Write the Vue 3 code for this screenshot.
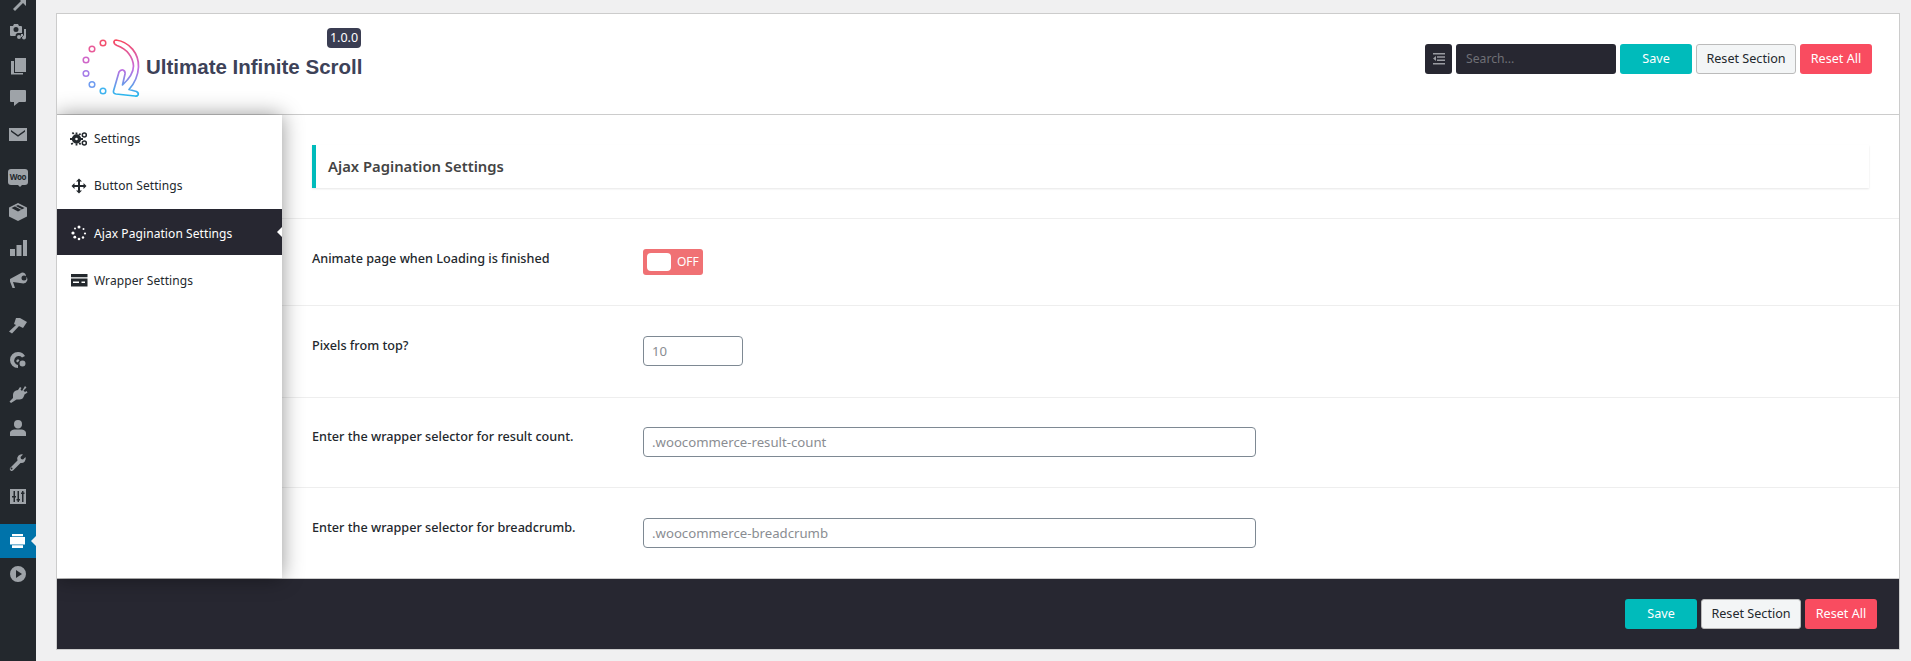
<script setup>
const adminIcons = [
  { top: -8, d: 'M5 17l8-8-3-3h8v8l-3-3-8 8z' },
  { top: 22, d: 'M2 4h3l1-2h4l1 2h2a1 1 0 0 1 1 1v6H9.500a3 3 0 0 0-2 3H3a1 1 0 0 1-1-1zM8 5a2.500 2.500 0 1 0 0 5 2.500 2.500 0 0 0 0-5zM16 7h2v8.500a2 2 0 1 1-2-2zM9 15a2 2 0 1 1 4 0 2 2 0 0 1-4 0zM13 12h2v3h-2z', rule: 'evenodd' },
  { top: 56, d: 'M7 2h11v14H7zM3 5h3v12h9v1.500H3z' },
  { top: 87, d: 'M3 3h14a1 1 0 0 1 1 1v10a1 1 0 0 1-1 1h-6l-5 4v-4H3a1 1 0 0 1-1-1V4a1 1 0 0 1 1-1z' },
  { top: 124, d: 'M1 4h18v13H1zM3 6l7 5 7-5v1.800l-7 5-7-5z', rule: 'evenodd' },
  { top: 168, woo: true },
  { top: 202, d: 'M10 1l9 4.500v9L10 19l-9-4.500v-9zM3.500 6L10 9.500 16.500 6 10 3zM7 4.500L13.500 8l1-.5L8 4z', rule: 'evenodd' },
  { top: 238, d: 'M2 11h5v7H2zM8.500 7h5v11h-5zM15 2h4v16h-4z' },
  { top: 270, d: 'M18 6.500a4 4 0 0 1-2.500 7L5 12l2 6H4.500L2 11.500V9l12-6.500a4 4 0 0 1 4 4zM13.500 8a2.500 2.500 0 1 0 5 0 2.500 2.500 0 0 0-5 0z', rule: 'evenodd' },
  { top: 316, d: 'M8 2h4l7 4-4 6-4-2 1-1-8 8.500L1 15.500 8 9 6 8z' },
  { top: 350, d: 'M10 2a8 8 0 0 1 7 4l-3 1.500a4.500 4.500 0 1 0-4 7.500v3a8 8 0 0 1 0-16zM14.500 10.500a3 3 0 1 1 0 6 3 3 0 0 1 0-6zM10 9l1.500 1.500-2 2L8 11z' },
  { top: 384, d: 'M17 2l1.500 1.500-3 3L17 8l1.500-1 1 1.500-3 2-.5 1.500a5 5 0 0 1-5 3.500l-2.500 0L3 19l-1.500-1.500 3.500-3.500 0-3a5 5 0 0 1 3-4.500L10 6l2-3 1.500 1-1 1.500 1.500 1.500z' },
  { top: 418, d: 'M10 2a4 4 0 0 1 4 4 4 4 0 0 1-4 4.500A4 4 0 0 1 6 6a4 4 0 0 1 4-4zM7 11.500h6c2.500 0 5 1.500 5 3.500v3H2v-3c0-2 2.500-3.500 5-3.500z' },
  { top: 452, d: 'M17.500 5l-2.500 2.500-2-.5-.5-2L15 2.500a4.500 4.500 0 0 0-5.500 6L2 16a2 2 0 0 0 3 2.500l7.500-7.500a4.500 4.500 0 0 0 5-6zM3.500 15.500a1 1 0 1 1 0 2 1 1 0 0 1 0-2z', rule: 'evenodd' },
  { top: 486, d: 'M2 3h16v15H2zM5.500 5v5H4v1.500h1.500V16H7v-4.500h1V10H7V5zM9.500 5v8h-1v1.500h1V16H11v-1.500h1V13h-1V5zM14 5v1.500h-1V8h1v8h1.500V8h1V6.500h-1V5z', rule: 'evenodd' },
  { top: 531, d: 'M4 3h11v2.300H4zM2 6h15v7.500H2zM4 14.300h11V17H4z', active: true },
  { top: 564, d: 'M10 2a8 8 0 1 1 0 16 8 8 0 0 1 0-16zM8 6v8l6-4z', rule: 'evenodd' }
]
const menu = [
  { label: 'Settings', icon: 'gears' },
  { label: 'Button Settings', icon: 'move' },
  { label: 'Ajax Pagination Settings', icon: 'spinner', active: true },
  { label: 'Wrapper Settings', icon: 'card' }
]
const dots = [
  [103, 43, '#f2506e'], [92, 49, '#e85a98'], [86, 60, '#cf66c8'],
  [86, 73.500, '#a67ce8'], [92, 84.500, '#6f9cf0'], [103, 91, '#3fb4f0']
]
</script>

<template>
  <div class="page">
    <aside class="adminbar">
      <div class="current"></div>
      <template v-for="(ic, i) in adminIcons" :key="i">
        <div v-if="ic.woo" class="woo" :style="{ top: ic.top + 1 + 'px' }"><span>Woo</span></div>
        <svg v-else class="aicon" :class="{ on: ic.active }" :style="{ top: ic.top + 'px' }" viewBox="0 0 20 20">
          <path :d="ic.d" :fill-rule="ic.rule || 'nonzero'" />
        </svg>
      </template>
    </aside>

    <main class="panel">
      <header class="top">
        <div class="brand">
          <svg class="logo" width="70" height="70" viewBox="77 34 70 70">
            <defs>
              <linearGradient id="lg" gradientUnits="userSpaceOnUse" x1="125" y1="40" x2="125" y2="97">
                <stop offset="0" stop-color="#f8485e" />
                <stop offset=".5" stop-color="#c56ce0" />
                <stop offset="1" stop-color="#22bdf0" />
              </linearGradient>
            </defs>
            <circle v-for="(d, i) in dots" :key="i" :cx="d[0]" :cy="d[1]" r="2.800" fill="none" :stroke="d[2]" stroke-width="1.500" />
            <path d="M116 40 C130 42 139 54 138.500 67 C138 76 134 84 129 89.500 L136.500 91.500 Q139 93 138 95 Q137 96.500 135 96 L116 94 Q113 93.500 113.500 91 L119 72 Q120.500 69.500 123 70 Q125.500 71 125 74 L122.500 85 C129 79 133.500 73 133.500 66 C133 57 127 49 117 45.500 Q113.500 44 114 41.500 Q114.500 40 116 40 Z" fill="none" stroke="url(#lg)" stroke-width="1.700" stroke-linejoin="round" />
          </svg>
          <span class="name">Ultimate Infinite Scroll</span>
          <span class="ver">1.0.0</span>
        </div>
        <div class="actions">
          <button class="expand" aria-label="Expand">
            <svg width="14" height="14" viewBox="0 0 14 14"><path d="M1 1h12v1.500H1zM5 4.200h8v1.500H5zM5 7.400h8v1.500H5zM1 11h12v1.600H1zM4 4v5L1 6.500z" fill="#9a9ba1" /></svg>
          </button>
          <div class="search">Search...</div>
          <button class="btn save">Save</button>
          <button class="btn reset">Reset Section</button>
          <button class="btn all">Reset All</button>
        </div>
      </header>

      <div class="middle">
        <nav class="menu">
          <a v-for="m in menu" :key="m.label" class="item" :class="{ active: m.active }">
            <svg class="micon" width="18" height="18" viewBox="0 0 18 18">
              <g v-if="m.icon === 'gears'">
                <circle cx="6.500" cy="9" r="3" fill="none" stroke="currentColor" stroke-width="3.400" />
                <path d="M5.600 2.500h1.800v2h-1.800zM5.600 13.500h1.800v2h-1.800zM0 8.100h2v1.800H0zM11 8.100h2v1.800h-2zM1.700 3l1.400-1.100 1.300 1.600L3 4.600zM8.600 13.400l1.400-1.100 1.300 1.600-1.400 1.100zM1.700 15l-1-1.400 1.700-1.200 1 1.400zM9.400 5.600l-1-1.400 1.700-1.200 1 1.400z" fill="currentColor" />
                <circle cx="14.300" cy="5" r="2" fill="none" stroke="currentColor" stroke-width="1.500" />
                <circle cx="14.300" cy="13" r="2" fill="none" stroke="currentColor" stroke-width="1.500" />
              </g>
              <path v-else-if="m.icon === 'move'" d="M9 1.500l3 3h-2v3.500h3.500V6l3 3-3 3v-2H10v3.500h2l-3 3-3-3h2V10H4.500v2l-3-3 3-3v2H8V4.500H6z" fill="currentColor" />
              <g v-else-if="m.icon === 'spinner'" fill="currentColor">
                <circle cx="9" cy="3" r="1.500" /><circle cx="13.500" cy="5" r="1" /><circle cx="15" cy="9.500" r="1.100" />
                <circle cx="13" cy="13.500" r="1.200" /><circle cx="9" cy="15" r="1.300" /><circle cx="4.800" cy="13.200" r="1.400" />
                <circle cx="3" cy="9" r="1.600" /><circle cx="5" cy="4.500" r="1" />
              </g>
              <path v-else d="M1 3h16.500v12.500H1zM1 6.200v1.300h16.500V6.200zM3 10.500v1.600h6v-1.600zM11.500 10.500v1.600h3.500v-1.600z" fill="currentColor" fill-rule="evenodd" />
            </svg>
            <span>{{ m.label }}</span>
          </a>
        </nav>

        <section class="content">
          <div class="heading-row">
            <h2 class="heading">Ajax Pagination Settings</h2>
          </div>
          <div class="row r1">
            <label class="lbl">Animate page when Loading is finished</label>
            <div class="toggle"><i class="knob"></i><span>OFF</span></div>
          </div>
          <div class="row r2">
            <label class="lbl">Pixels from top?</label>
            <input class="field small" value="10" />
          </div>
          <div class="row r3">
            <label class="lbl">Enter the wrapper selector for result count.</label>
            <input class="field wide" value=".woocommerce-result-count" />
          </div>
          <div class="row r4">
            <label class="lbl">Enter the wrapper selector for breadcrumb.</label>
            <input class="field wide" value=".woocommerce-breadcrumb" />
          </div>
        </section>
      </div>

      <footer class="bottom">
        <button class="btn save">Save</button>
        <button class="btn reset">Reset Section</button>
        <button class="btn all">Reset All</button>
      </footer>
    </main>
  </div>
</template>

<style>
html, body { margin: 0; background: #f0f0f1; }
</style>

<style scoped>
.page {
  display: flex;
  height: 661px;
  overflow: hidden;
  font-family: "Noto Sans", "Open Sans", sans-serif;
  background: #f0f0f1;
}
.adminbar {
  position: relative;
  flex: 0 0 36px;
  background: #23282d;
}
.current {
  position: absolute;
  left: 0;
  top: 524px;
  width: 36px;
  height: 34px;
  background: #0073aa;
}
.current::after {
  content: "";
  position: absolute;
  right: 0;
  top: 12px;
  border: 5px solid transparent;
  border-right-color: #f0f0f1;
  border-left-width: 0;
}
.aicon {
  position: absolute;
  left: 8px;
  width: 20px;
  height: 20px;
  fill: #9ea3a8;
}
.aicon.on { fill: #fff; }
.woo {
  position: absolute;
  left: 8px;
  width: 20px;
  height: 16px;
  background: #9ea3a8;
  border-radius: 3px;
  display: flex;
  align-items: center;
  justify-content: center;
}
.woo::after {
  content: "";
  position: absolute;
  left: 10px;
  bottom: -2px;
  border: 2px solid transparent;
  border-top-color: #9ea3a8;
  border-bottom-width: 0;
}
.woo span {
  font-size: 8px;
  font-weight: 700;
  color: #23282d;
  letter-spacing: -.4px;
  line-height: 1;
}
.panel {
  width: 1844px;
  height: 637px;
  margin: 13px 0 0 20px;
  box-sizing: border-box;
  border: 1px solid #ccc;
  display: flex;
  flex-direction: column;
  background: #fff;
  overflow: hidden;
}
.top {
  flex: 0 0 101px;
  box-sizing: border-box;
  display: flex;
  justify-content: space-between;
  border-bottom: 1px solid #ccc;
}
.brand {
  position: relative;
  width: 400px;
}
.logo {
  position: absolute;
  left: 20px;
  top: 20px;
}
.name {
  position: absolute;
  left: 89px;
  top: 33px;
  font-family: "Liberation Sans", Arial, sans-serif;
  font-size: 20.500px;
  font-weight: 700;
  line-height: 40px;
  color: #3d4258;
  white-space: nowrap;
}
.ver {
  position: absolute;
  left: 270px;
  top: 14px;
  width: 34px;
  height: 20px;
  border-radius: 4px;
  background: #3a3d52;
  color: #fff;
  font-size: 12.500px;
  line-height: 20px;
  text-align: center;
}
.actions {
  display: flex;
  gap: 4px;
  padding: 30px 27px 0 0;
}
button { font-family: inherit; margin: 0; cursor: pointer; }
.expand {
  width: 27px;
  height: 30px;
  padding: 0;
  border: 0;
  border-radius: 3px;
  background: #272731;
  display: flex;
  align-items: center;
  justify-content: center;
}
.search {
  width: 160px;
  height: 30px;
  box-sizing: border-box;
  padding: 0 10px;
  border-radius: 3px;
  background: #272731;
  color: #6f7076;
  font-size: 12.200px;
  line-height: 30px;
}
.btn {
  height: 30px;
  box-sizing: border-box;
  padding: 0;
  border-radius: 3px;
  font-size: 12.600px;
  line-height: 28px;
  border: 1px solid transparent;
}
.save { width: 72px; background: #00bbbb; color: #fff; }
.reset { width: 100px; background: #f3f5f6; color: #23282d; border-color: #bbb; }
.all { width: 72px; background: #f94c60; color: #fff; }
.middle {
  flex: 1;
  display: flex;
  min-height: 0;
}
.menu {
  position: relative;
  flex: 0 0 225px;
  background: #fff;
  box-shadow: 0 0 20px rgba(0, 0, 0, .42);
  z-index: 1;
  display: flex;
  flex-direction: column;
}
.item {
  position: relative;
  height: 47px;
  box-sizing: border-box;
  display: flex;
  align-items: center;
  gap: 6px;
  padding-left: 13px;
  font-size: 12px;
  letter-spacing: .08px;
  color: #23282d;
}
.item.active {
  height: 46px;
  padding-top: 2px;
  background: #272731;
  color: #fff;
}
.item:last-child { height: 50px; }
.item.active::after {
  content: "";
  position: absolute;
  right: 0;
  top: 18px;
  border: 5px solid transparent;
  border-right-color: #fff;
  border-left-width: 0;
}
.micon { flex: none; }
.content {
  flex: 1;
  min-width: 0;
  display: flex;
  flex-direction: column;
}
.heading-row {
  flex: 0 0 104px;
  box-sizing: border-box;
  padding: 30px 30px 0 30px;
  border-bottom: 1px solid #eee;
}
.heading {
  margin: 0;
  height: 43px;
  box-sizing: border-box;
  padding-left: 12px;
  border-left: 4px solid #00bbbb;
  box-shadow: 0 1px 2px rgba(0, 0, 0, .1);
  font-size: 14.800px;
  font-weight: 600;
  line-height: 43px;
  color: #444;
}
.row {
  display: flex;
  box-sizing: border-box;
  padding: 30px 0 0 30px;
  border-bottom: 1px solid #eee;
}
.r1 { flex: 0 0 87px; }
.r2 { flex: 0 0 92px; }
.r3 { flex: 0 0 90px; padding-top: 29px; }
.r4 { flex: 1; border-bottom: 0; }
.lbl {
  flex: 0 0 331px;
  font-size: 12.650px;
  font-weight: 500;
  line-height: 19px;
  color: #23282d;
}
.toggle {
  width: 60px;
  height: 26px;
  position: relative;
  border-radius: 3px;
  background: #f07174;
  color: #fff;
  font-size: 12px;
  line-height: 26px;
  box-sizing: border-box;
  padding-left: 34px;
}
.knob {
  position: absolute;
  left: 4px;
  top: 4px;
  width: 24px;
  height: 18px;
  border-radius: 4px;
  background: #fff;
}
.field {
  height: 30px;
  box-sizing: border-box;
  border: 1px solid #7e8993;
  border-radius: 4px;
  padding: 0 8px;
  background: #fff;
  color: #8a8d92;
  font-family: inherit;
  font-size: 13.200px;
  outline: none;
}
.small { width: 100px; }
.wide { width: 613px; }
.bottom {
  flex: 0 0 71px;
  border-top: 1px solid #ccc;
  background: #272731;
  display: flex;
  justify-content: flex-end;
  align-items: flex-start;
  gap: 4px;
  padding: 20px 22px 0 0;
  box-sizing: border-box;
}
</style>
